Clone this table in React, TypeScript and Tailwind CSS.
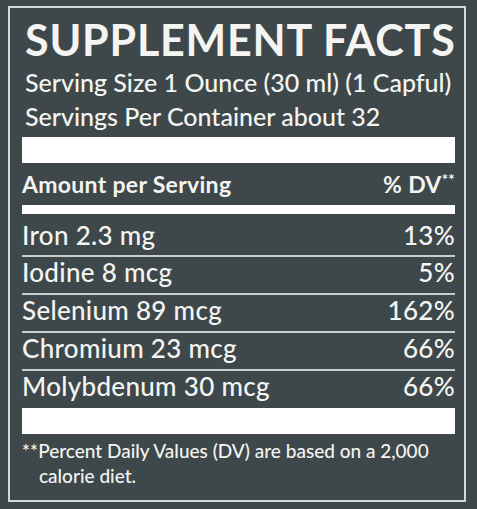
const rows = [
    { name: "Iron 2.3 mg", dv: "13%" },
    { name: "Iodine 8 mcg", dv: "5%" },
    { name: "Selenium 89 mcg", dv: "162%" },
    { name: "Chromium 23 mcg", dv: "66%" },
    { name: "Molybdenum 30 mcg", dv: "66%" },
];

const App = () => {
    return (
        <div className="w-[477px] h-[509px] bg-[#3e484a] pt-[6px] pl-[8px] font-['Lato',sans-serif] text-[#f4f4f2]">
            <div className="w-[458px] h-[496px] border-2 border-[#d3d7d6] pl-[12px] pr-[9px] pt-[10px]">
                <h1 className="text-[43px] leading-[44px] font-bold tracking-[0.8px] mb-[3px] pl-[3px] whitespace-nowrap">
                    SUPPLEMENT FACTS
                </h1>
                <div className="text-[25px] leading-[34px] font-medium pl-[3px] whitespace-nowrap">
                    <div>Serving Size 1 Ounce (30 ml) (1 Capful)</div>
                    <div>Servings Per Container about 32</div>
                </div>
                <div className="mt-[4px] h-[26px] bg-white" />
                <div className="flex justify-between text-[23px] leading-[42px] font-bold tracking-[0.3px]">
                    <span>Amount per Serving</span>
                    <span>
                        % DV<span className="text-[15px] align-top leading-[32px]">**</span>
                    </span>
                </div>
                <div className="h-[9px] bg-white" />
                {rows.map((row, i) => (
                    <div
                        key={row.name}
                        className={
                            i === 0
                                ? "flex justify-between h-[43px] pt-[6px] text-[26px] leading-[30px] font-medium tracking-[0.3px] border-b-2 border-[#c9cdcc]"
                                : i === rows.length - 1
                                ? "flex justify-between h-[37px] text-[26px] leading-[30px] font-medium tracking-[0.3px]"
                                : "flex justify-between h-[38px] text-[26px] leading-[30px] font-medium tracking-[0.3px] border-b-2 border-[#c9cdcc]"
                        }
                    >
                        <span>{row.name}</span>
                        <span>{row.dv}</span>
                    </div>
                ))}
                <div className="h-[26px] bg-white" />
                <p className="pt-[4px] text-[19px] leading-[25px] font-medium pl-[17px] -indent-[17px]">
                    **Percent Daily Values (DV) are based on a 2,000 calorie diet.
                </p>
            </div>
        </div>
    );
};

export default App;
